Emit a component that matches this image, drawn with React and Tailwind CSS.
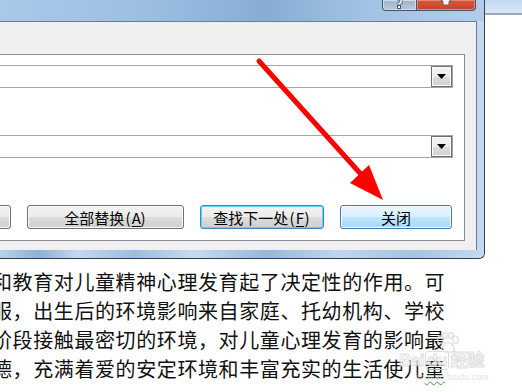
import React from 'react';

const cjk = "font-['Noto_Sans_CJK_SC','Noto_Sans',sans-serif]";

function Combo() {
  return (
    <div className="-ml-[10px] flex h-[23px] border border-[#a5a5a5] bg-white">
      <div className="flex-1" />
      <div className="flex w-[21px] items-center justify-center border border-[#707070] bg-[linear-gradient(180deg,#f4f4f4_0%,#ececec_50%,#dcdcdc_50%,#d2d2d2_100%)] shadow-[inset_0_0_0_1px_#fafafa]">
        <svg width="9" height="5" viewBox="0 0 9 5">
          <polygon points="0,0 9,0 4.5,5" fill="#000" />
        </svg>
      </div>
    </div>
  );
}

function Key({ ch }) {
  // 半角括号 + 带下划线的访问键
  return (
    <span className="inline-flex">
      <span className="inline-block w-[7.5px] text-center">(</span>
      <span className="inline-block w-[7.5px] text-center underline underline-offset-[2px]">{ch}</span>
      <span className="inline-block w-[7.5px] text-center">)</span>
    </span>
  );
}

const btnBase = 'flex h-[24px] shrink-0 items-center justify-center rounded-[3px] border text-[15px] leading-none text-black';
const btnGray = 'border-[#707070] bg-[linear-gradient(180deg,#f3f3f3_0%,#ebebeb_50%,#dddddd_50%,#cfcfcf_100%)] shadow-[inset_0_0_0_1px_#fbfbfb]';

export default function App() {
  return (
    <div className={`relative h-[392px] w-[522px] overflow-hidden bg-white ${cjk}`}>
      {/* 窗口区 */}
      <div className="flex">
        <div className="flex h-[259px] w-[485px] shrink-0 flex-col rounded-br-[6px] border-b border-r border-[#33404f] bg-[linear-gradient(180deg,#9dbfe3_0%,#a9c7e7_60%,#c3d9ef_100%)]">
          {/* 标题栏 */}
          <div className="flex h-[21px] justify-end bg-[linear-gradient(90deg,#a9c9ea_0%,#9cbee3_30%,#88add5_55%,#a1c2e4_75%,#b2cdea_100%)] pr-[8px]">
            <div className="flex h-[11px] w-[35px] items-end justify-center rounded-bl-[4px] border border-t-0 border-[#46556b] bg-[linear-gradient(180deg,#9fb3cc,#b8c9dd)] shadow-[inset_0_0_0_1px_#d0dcea]">
              <svg width="10" height="10" viewBox="0 0 10 10" className="mb-[1px]">
                <path d="M2 0 L6 0 L6 3.5 L4 4.5 L4 5.5" stroke="#4c5a6e" strokeWidth="3" fill="none" />
                <path d="M2 0 L6 0 L6 3.5 L4 4.5 L4 5.5" stroke="#fff" strokeWidth="1.5" fill="none" />
                <rect x="2.5" y="6.5" width="3" height="3" fill="#fff" stroke="#4c5a6e" strokeWidth="1" />
              </svg>
            </div>
            <div className="flex h-[11px] w-[59px] items-start justify-center overflow-hidden rounded-br-[4px] border border-l-0 border-t-0 border-[#46556b] bg-[linear-gradient(180deg,#d8573d,#c4452c)] shadow-[inset_0_0_0_1px_#e48a72]">
              <svg width="20" height="7" viewBox="0 0 20 7">
                <path d="M4 -4 L12 4 M16 -4 L8 4" stroke="#4a5566" strokeWidth="5" />
                <path d="M4 -4 L12 4 M16 -4 L8 4" stroke="#fff" strokeWidth="3" />
              </svg>
            </div>
          </div>

          {/* 客户区 + 右边框 */}
          <div className="flex flex-1 pr-[7px] shadow-[inset_-7px_0_0_#c2d9f2]">
            <div className="flex flex-1 flex-col border-r border-t border-[#6e7c8e] bg-[#f0f0f0] pb-[9px] pr-[11px] pt-[32px]">
              <div className="flex h-[187px] flex-col border border-l-0 border-[#898c95] bg-white pr-[11px] pt-[10px]">
                <Combo />
                <div className="mt-[47px]">
                  <Combo />
                </div>
                <div className="mt-[47px] flex">
                  <div className={`${btnBase} ${btnGray} -ml-[50px] w-[61px]`} />
                  <div className={`${btnBase} ${btnGray} ml-[16px] w-[157px]`}>
                    全部替换<Key ch="A" />
                  </div>
                  <div className={`${btnBase} ml-[16px] w-[124px] border-[#3c8ac4] bg-[linear-gradient(180deg,#f3f3f3_0%,#ebebeb_50%,#dddddd_50%,#cfcfcf_100%)] shadow-[inset_0_0_0_1px_#5fd0f8]`}>
                    查找下一处<Key ch="F" />
                  </div>
                  <div className={`${btnBase} ml-[16px] w-[112px] border-[#3c7fb1] bg-[linear-gradient(180deg,#eaf6fd_0%,#d9f0fc_50%,#bee6fd_50%,#a7d9f5_100%)] shadow-[inset_0_0_0_1px_#f2fafe]`}>
                    关闭
                  </div>
                </div>
              </div>
            </div>
          </div>

          {/* 下边框 */}
          <div className="h-[8px] rounded-br-[5px] bg-[linear-gradient(90deg,#b9d2eb_0%,#8eb1d7_8%,#c3d8ee_16%,#9dbde0_28%,#c6dbf0_40%,#97b8dc_55%,#bfd6ee_70%,#a5c3e4_85%,#c4daf1_100%)]" />
        </div>

        {/* 右侧背景窗口 */}
        <div className="flex flex-1 flex-col">
          <div className="h-[13px] bg-[linear-gradient(180deg,#c3d8ef,#d8e6f5)]" />
          <div className="h-[2px] bg-[#9aa7b6]" />
        </div>
      </div>

      {/* 文档正文 */}
      <div className="-ml-[8px] pt-[8px] text-[20px] leading-[29px] tracking-[0.6px] text-[#111]">
        <div className="whitespace-nowrap">和教育对儿童精神心理发育起了决定性的作用。可</div>
        <div className="whitespace-nowrap">服，出生后的环境影响来自家庭、托幼机构、学校</div>
        <div className="whitespace-nowrap">阶段接触最密切的环境，对儿童心理发育的影响最</div>
        <div className="whitespace-nowrap">
          德，充满着爱的安定环境和丰富充实的生活使儿
          <span className="underline decoration-wavy decoration-[#3aa03a] decoration-[1px] underline-offset-[4px]">童</span>
        </div>
      </div>

      {/* 百度经验水印 */}
      <div className="absolute left-[399px] top-[332px] flex flex-col items-start opacity-80">
        <svg width="28" height="21" viewBox="0 0 30 22" className="ml-[34px]">
          <g fill="none" stroke="#dcdcdc" strokeWidth="1.5">
            <ellipse cx="8" cy="8" rx="3" ry="4" />
            <ellipse cx="13" cy="3.5" rx="2.5" ry="3" />
            <ellipse cx="19" cy="3.5" rx="2.5" ry="3" />
            <ellipse cx="24" cy="8" rx="3" ry="4" />
            <path d="M9 19 C9 13 14 11 16 11 C18 11 23 13 23 19 C23 22 9 22 9 19 Z" />
          </g>
        </svg>
        <div className="-mt-[3px] flex items-baseline font-['Liberation_Sans',sans-serif] text-[17px] font-bold leading-none tracking-[-0.5px] text-white [-webkit-text-stroke:1px_#d8d8d8]">
          Bai<span className="ml-[1px] rounded-[3px] border border-[#d8d8d8] px-[1px]">du</span>
          <span className={`${cjk} ml-[2px] text-[17px]`}>经验</span>
        </div>
        <div className="ml-[17px] mt-[3px] font-['Liberation_Sans',sans-serif] text-[9px] leading-none text-[#dedede]">
          jingyan.baidu.com
        </div>
      </div>

      {/* 红色箭头 */}
      <svg className="absolute left-0 top-0" width="522" height="392" viewBox="0 0 522 392">
        <line x1="259" y1="61" x2="368" y2="182" stroke="#ff0000" strokeWidth="5" strokeLinecap="round" />
        <polygon points="383,200 350,183 369,165" fill="#ff0000" />
      </svg>
    </div>
  );
}
